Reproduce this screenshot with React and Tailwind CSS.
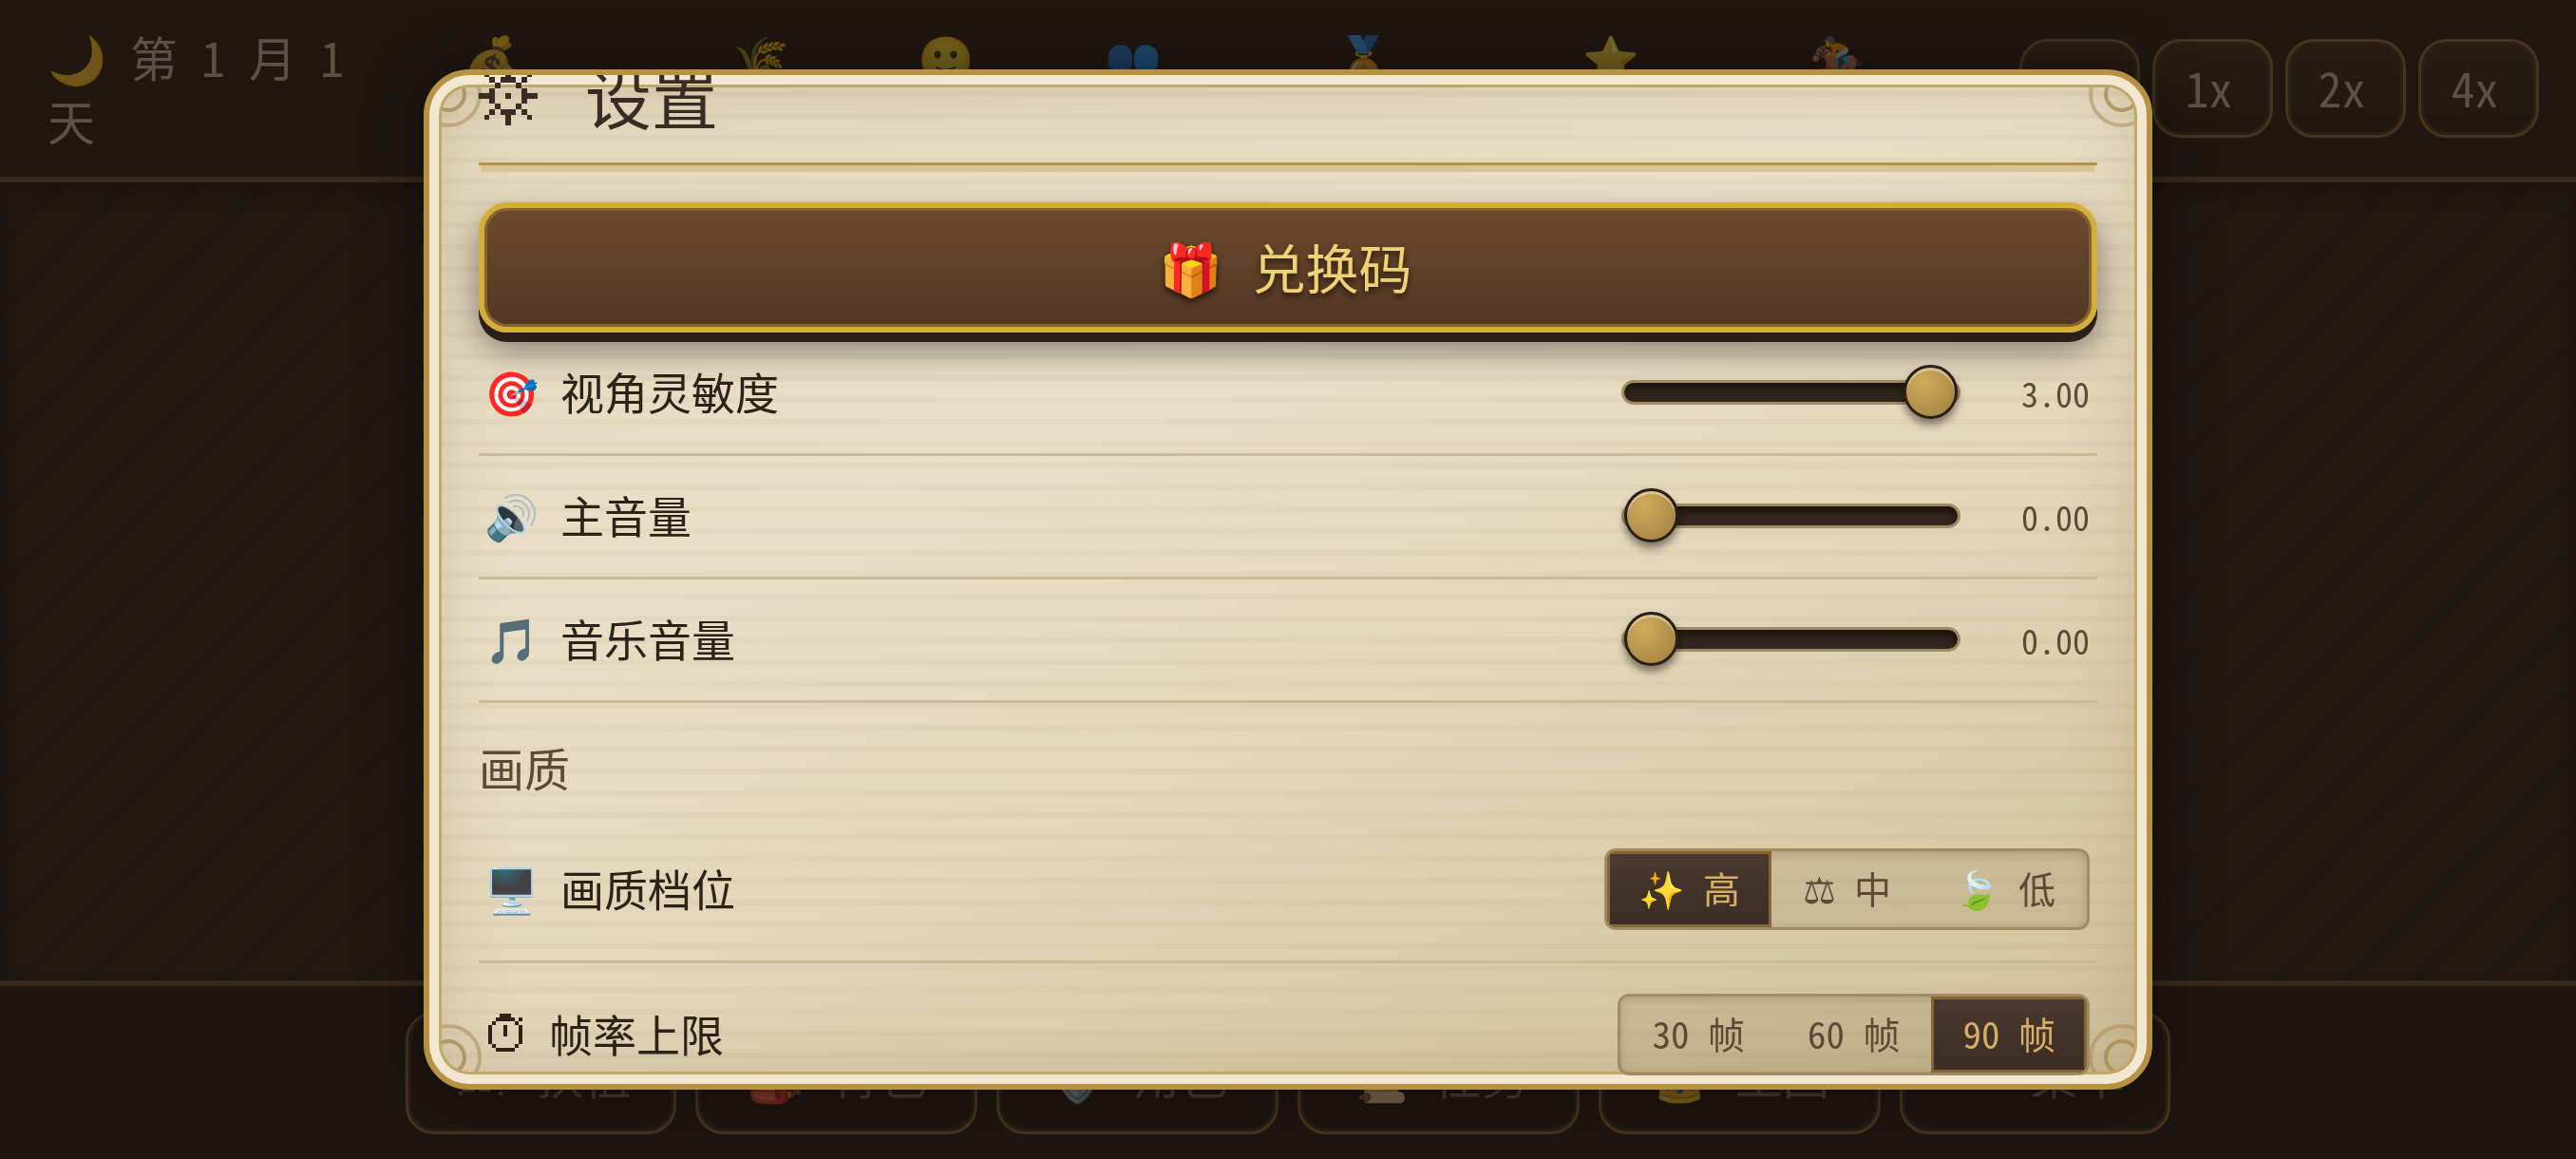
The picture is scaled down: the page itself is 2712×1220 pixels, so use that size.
import { useState, useRef, useLayoutEffect } from 'react';

const GearIcon = () => (
  <svg className="w-[62px] h-[62px] shrink-0" viewBox="0 0 11 11" fill="currentColor" shapeRendering="crispEdges" aria-hidden="true">
    <path d="M5 0h1v2h1v1h-3v-1h1zM5 11h1v-2h1v-1h-3v1h1zM0 5h2v-1h1v3h-1v-1h-2zM11 5h-2v-1h-1v3h1v-1h2zM5 5h1v1h-1z"/>
    <path d="M1 1h1v1h-1zM2 2h1v1h-1zM3 3h1v1h-1zM9 1h1v1h-1zM8 2h1v1h-1zM7 3h1v1h-1zM3 7h1v1h-1zM2 8h1v1h-1zM1 9h1v1h-1zM7 7h1v1h-1zM8 8h1v1h-1zM9 9h1v1h-1z"/>
  </svg>
);

const StopwatchIcon = () => (
  <svg className="w-[36px] h-[40px] shrink-0" viewBox="0 0 9 10" fill="currentColor" shapeRendering="crispEdges" aria-hidden="true">
    <path d="M3 0h3v1h1v1h-5v-1h1zM8 1h1v1h-1zM7 2h1v1h-1zM1 2h1v1h-1zM0 3h1v5h-1zM8 3h1v5h-1zM1 8h1v1h-1zM7 8h1v1h-1zM2 9h5v1h-5zM4 3h1v3h-1z"/>
  </svg>
);

const FlagIcon = () => (
  <svg className="w-[46px] h-[46px] shrink-0" viewBox="0 0 11 11" fill="currentColor" shapeRendering="crispEdges" aria-hidden="true">
    <path d="M2 0h7v1h-7zM2 3h7v1h-7zM5 1h1v6h-1zM0 6h11v1h-11zM2 7h1v2h-1zM8 7h1v2h-1zM1 9h3v1h-3zM5 9h3v1h-3zM0 10h1v1h-1zM10 10h1v1h-1z"/>
  </svg>
);

const Ornament = ({ className }) => (
  <svg className={`absolute w-[70px] h-[70px] ${className}`} viewBox="0 0 70 70" fill="none" stroke="#a4884f" strokeWidth="4" aria-hidden="true">
    <circle cx="35" cy="35" r="17" opacity="0.75"/>
    <circle cx="35" cy="35" r="33" opacity="0.5"/>
  </svg>
);

const STATS = [
  { icon: '💰', cell: 'flex-[320]', pad: 'pr-[54px]' },
  { icon: '🌾', cell: 'flex-[193]' },
  { icon: '🙂', cell: 'flex-[197]' },
  { icon: '👥', cell: 'flex-[197]' },
  { icon: '🏅', cell: 'flex-[289]' },
  { icon: '⭐', cell: 'flex-[231]' },
  { icon: '🏇', cell: 'flex-[247]' },
];

const MENU = [
  { icon: <FlagIcon />, label: '扶植', width: 'w-[285px]' },
  { icon: <span className="opacity-40">🎒</span>, label: '背包', width: 'w-[297px]' },
  { icon: <span className="opacity-40">🛡️</span>, label: '角色', width: 'w-[297px]' },
  { icon: <span className="opacity-40">📜</span>, label: '任务', width: 'w-[297px]' },
  { icon: <span className="opacity-40">👑</span>, label: '王国', width: 'w-[297px]' },
  { icon: null, label: '菜单', width: 'w-[285px]' },
];

const QUALITY = [
  { value: 'high', icon: '✨', label: '高' },
  { value: 'mid', icon: '⚖', label: '中' },
  { value: 'low', icon: '🍃', label: '低' },
];

const FPS = [
  { value: '30', label: '30 帧' },
  { value: '60', label: '60 帧' },
  { value: '90', label: '90 帧' },
];

function TopBar() {
  return (
    <header className="flex items-start h-[192px] border-b-[6px] border-[#382a1a] bg-[#201711]">
      <p className="w-[385px] shrink-0 pl-[50px] pt-[26px] text-[50px] leading-[67px] text-[#5d5144]">
        <span className="opacity-35">🌙</span> 第 1 月 1 天
      </p>
      <ul className="flex flex-1 min-w-0">
        {STATS.map(s => (
          <li key={s.icon} className={`${s.cell} pt-[26px] text-center text-[48px] leading-[67px]`}>
            <div className={`opacity-40 ${s.pad || ''}`}>{s.icon}</div>
          </li>
        ))}
      </ul>
      <nav className="flex shrink-0 gap-[13px] pl-[68px] pr-[39px] pt-[41px]" aria-label="速度">
        {['', '1x', '2x', '4x'].map(s => (
          <button
            key={s}
            type="button"
            aria-label={s || '暂停'}
            className="w-[127px] h-[104px] pb-1 pr-2 rounded-[30px] border-[3px] border-[#45351d] bg-linear-to-b from-[#271d15] to-[#1f1610] shadow-[inset_0_0_0_3px_#2b2016] text-[50px] leading-none text-[#5d5144]"
          >
            {s}
          </button>
        ))}
      </nav>
    </header>
  );
}

function BottomBar() {
  return (
    <footer className="flex justify-center gap-[20px] h-[188px] pt-[27px] border-t-[6px] border-[#382a1a] bg-[#1e1610]">
      {MENU.map(m => (
        <button
          key={m.label}
          type="button"
          className={`${m.width} flex items-center justify-center gap-[28px] h-[129px] rounded-[30px] border-[3px] border-[#45351d] shadow-[inset_0_0_0_3px_#291e14] text-[50px] leading-none text-[#463a33]`}
        >
          <span className="w-[62px] flex justify-center">{m.icon}</span>
          {m.label}
        </button>
      ))}
    </footer>
  );
}

function Row({ icon, label, htmlFor, wide = true, children }) {
  return (
    <div className="flex items-center justify-between pl-[6px] pr-[8px] py-[32px] border-b-[3px] border-[#cabb98]">
      <label htmlFor={htmlFor} id={`${htmlFor}-label`} className="flex items-center pb-[4px] text-[46px] leading-[59px] text-[#2c2218]">
        <span className={wide ? 'w-[80px] flex' : 'w-[68px] flex pl-1'}>{icon}</span>
        {label}
      </label>
      {children}
    </div>
  );
}

function SliderRow({ id, icon, label, min = 0, max = 1, initial }) {
  const [value, setValue] = useState(initial);
  return (
    <Row icon={icon} label={label} htmlFor={id}>
      <div className="flex items-center h-[63px] pb-[2px]">
        <input
          id={id}
          type="range"
          min={min}
          max={max}
          step="0.01"
          value={value}
          onChange={(e) => setValue(Number(e.target.value))}
          className="appearance-none w-[357px] h-[26px] rounded-full border-[3px] border-[#a08c64] bg-[#33271f] shadow-[inset_0_6px_9px_#1c140d] [&::-webkit-slider-thumb]:appearance-none [&::-webkit-slider-thumb]:w-[57px] [&::-webkit-slider-thumb]:h-[57px] [&::-webkit-slider-thumb]:rounded-full [&::-webkit-slider-thumb]:border-[3px] [&::-webkit-slider-thumb]:border-[#2a2018] [&::-webkit-slider-thumb]:bg-[radial-gradient(circle_at_35%_30%,#d0ab5b,#9f7f3f)] [&::-webkit-slider-thumb]:shadow-[0_6px_9px_rgba(0,0,0,0.45),inset_0_3px_0_rgba(255,255,255,0.4)]"
        />
        <output htmlFor={id} className="w-[136px] text-right text-[36px] text-[#5c4a37]">{value.toFixed(2)}</output>
      </div>
    </Row>
  );
}

function Segmented({ id, options, initial }) {
  const [current, setCurrent] = useState(initial);
  return (
    <div role="group" aria-labelledby={`${id}-label`} id={id} className="flex rounded-[12px] border-[3px] border-[#a08c64] bg-[#7d6a42]/15 shadow-[inset_0_3px_9px_rgba(60,40,10,0.2)] overflow-hidden">
      {options.map(o => (
        <button
          key={o.value}
          type="button"
          aria-pressed={current === o.value}
          onClick={() => setCurrent(o.value)}
          className={`flex items-center gap-[19px] h-[80px] px-[33px] pb-[3px] text-[39px] leading-none ${
            current === o.value
              ? 'bg-linear-to-b from-[#4a3a2f] to-[#3a2c24] shadow-[inset_0_0_0_3px_#846735] text-[#d6ae66]'
              : 'text-[#5c4a37]'
          }`}
        >
          {o.icon && <span>{o.icon}</span>}
          {o.label}
        </button>
      ))}
    </div>
  );
}

function SettingsDialog() {
  const scrollRef = useRef(null);

  useLayoutEffect(() => {
    scrollRef.current.scrollTop = 78;
  }, []);

  return (
    <div
      role="dialog"
      aria-modal="true"
      aria-labelledby="settings-title"
      className="relative flex w-full max-w-[1820px] max-h-[88vh] rounded-[48px] border-[6px] border-[#b79242] overflow-hidden bg-[repeating-linear-gradient(180deg,transparent_0_17px,rgba(139,110,60,0.05)_17px_23px),linear-gradient(160deg,#e3d8bd_0%,#e9dfc7_35%,#e2d5b8_62%,#cfbf98_100%)] shadow-[0_0_60px_rgba(0,0,0,0.5)]"
    >
      <div className="absolute inset-0 rounded-[42px] shadow-[inset_0_0_0_10px_#f2e8d2,inset_0_0_0_13px_#c2a76b,inset_0_0_80px_rgba(110,85,40,0.25)]" />
      <div className="absolute inset-[13px] rounded-[29px] overflow-hidden">
        <Ornament className="left-[-28px] top-[-28px]" />
        <Ornament className="right-[-22px] top-[-28px]" />
        <Ornament className="left-[-28px] bottom-[-20px]" />
        <Ornament className="right-[-22px] bottom-[-20px]" />
      </div>

      <div ref={scrollRef} className="relative flex-1 overflow-y-auto [scrollbar-width:none] p-[52px]">
        <h2 id="settings-title" className="flex items-center gap-[50px] pb-[22px] border-b-[3px] border-[#b7914a] text-[70px] leading-[96px] font-medium text-[#3a2c24]">
          <GearIcon />
          设置
        </h2>
        <div className="mx-[3px] h-[7px] bg-[#d8c397]" />

        <button
          type="button"
          className="flex items-center justify-center gap-[32px] w-full h-[137px] mt-[32px] pb-[4px] pr-[6px] rounded-[30px] border-[6px] border-[#d3ae38] bg-linear-to-b from-[#6b4a2e] to-[#533723] shadow-[0_10px_0_#2a2018,0_18px_36px_rgba(0,0,0,0.45),inset_0_0_0_3px_#85622f] text-[56px] leading-none text-[#efd274] [text-shadow:0_4px_6px_rgba(0,0,0,0.6)]"
        >
          <span className="text-[54px]">🎁</span>
          兑换码
        </button>

        <SliderRow id="sensitivity" icon="🎯" label="视角灵敏度" max={3} initial={3} />
        <SliderRow id="master-volume" icon="🔊" label="主音量" initial={0} />
        <SliderRow id="music-volume" icon="🎵" label="音乐音量" initial={0} />

        <h3 className="pt-[36px] pb-[22px] text-[48px] leading-[63px] text-[#5c4a37]">画质</h3>
        <Row icon="🖥️" label="画质档位" htmlFor="quality">
          <Segmented id="quality" options={QUALITY} initial="high" />
        </Row>
        <Row icon={<StopwatchIcon />} label="帧率上限" htmlFor="fps" wide={false}>
          <Segmented id="fps" options={FPS} initial="90" />
        </Row>
      </div>
    </div>
  );
}

export default function App() {
  return (
    <div className="flex flex-col min-h-screen bg-[#1f1711] font-['Noto_Sans_Mono_CJK_SC','Noto_Sans_CJK_SC',sans-serif]">
      <TopBar />
      <main className="flex-1 bg-[#211812] bg-[repeating-linear-gradient(135deg,transparent_0_42px,rgba(0,0,0,0.08)_42px_51px)] shadow-[inset_0_12px_18px_rgba(0,0,0,0.2)]" />
      <BottomBar />
      <div className="fixed inset-0 flex items-center justify-center px-10">
        <SettingsDialog />
      </div>
    </div>
  );
}
